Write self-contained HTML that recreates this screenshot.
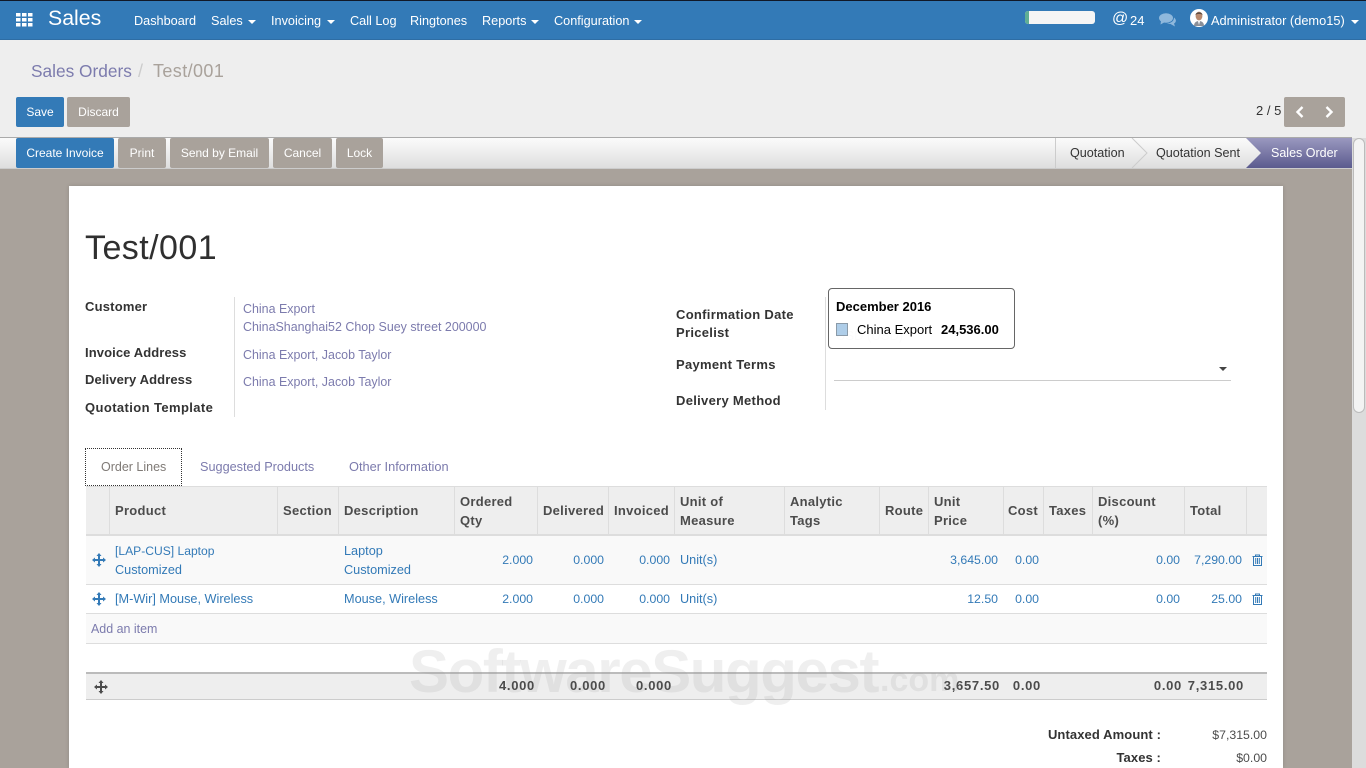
<!DOCTYPE html>
<html><head><meta charset="utf-8"><title>Sales</title>
<style>
html,body{margin:0;padding:0;width:1366px;height:768px;overflow:hidden;background:#a9a29b;font-family:"Liberation Sans",sans-serif;font-size:13px;color:#333}
#root{left:0;top:0;width:1366px;height:768px;overflow:hidden;background:#a9a29b}
div,span{position:absolute;white-space:nowrap}
.t{line-height:20px;height:20px}
.w{color:#fff}
.nav{color:#fff;font-size:12.7px;top:11px}
.car{width:0;height:0;border-left:4px solid transparent;border-right:4px solid transparent;border-top:4px solid currentColor}
.btn{height:30px;line-height:31px;text-align:center;color:#fff;background:#a9a29b;border-radius:2px;font-size:12px}
.pri{background:#337ab7}
.lb{font-weight:bold;color:#333;font-size:13px;letter-spacing:.3px}
.lk{color:#7c7bad;font-size:12.45px}
.th{font-weight:bold;color:#4c4c4c;font-size:13px;letter-spacing:.28px;line-height:19px}
.c{color:#337ab7;font-size:12.7px;line-height:20px}
.n{color:#337ab7;font-size:12.3px;line-height:20px;text-align:right}
.r{text-align:right}
.tot{font-weight:bold;color:#4c4c4c;font-size:13px;letter-spacing:.7px;line-height:20px}
.vl{top:487px;width:1px;height:47px;background:#ddd}
</style></head><body>
<div id="root">

<!-- navbar -->
<div style="left:0;top:0;width:1366px;height:40px;background:#337ab7;border-bottom:1px solid #2e6da4;box-sizing:border-box"></div>
<div style="left:0;top:0;width:1366px;height:1px;background:#111827"></div>
<svg style="position:absolute;left:16px;top:12px" width="18" height="16" viewBox="0 0 18 16"><g fill="#fff"><rect x="0" y="1" width="4.5" height="3.5"/><rect x="6" y="1" width="4.5" height="3.5"/><rect x="12" y="1" width="4.5" height="3.5"/><rect x="0" y="6" width="4.5" height="3.5"/><rect x="6" y="6" width="4.5" height="3.5"/><rect x="12" y="6" width="4.5" height="3.5"/><rect x="0" y="11" width="4.5" height="3.5"/><rect x="6" y="11" width="4.5" height="3.5"/><rect x="12" y="11" width="4.5" height="3.5"/></g></svg>
<span class="w" style="left:48px;top:5px;font-size:21.3px;line-height:26px">Sales</span>
<span class="t nav" style="left:134px">Dashboard</span>
<span class="t nav" style="left:211px">Sales</span><div class="car w" style="left:248px;top:20px"></div>
<span class="t nav" style="left:271px">Invoicing</span><div class="car w" style="left:327px;top:20px"></div>
<span class="t nav" style="left:350px">Call Log</span>
<span class="t nav" style="left:410px">Ringtones</span>
<span class="t nav" style="left:482px">Reports</span><div class="car w" style="left:531px;top:20px"></div>
<span class="t nav" style="left:554px">Configuration</span><div class="car w" style="left:634px;top:20px"></div>

<div style="left:1025px;top:11px;width:70px;height:13px;background:#f5f5f5;border-radius:3px;overflow:hidden"><div style="left:0;top:0;width:4px;height:13px;background:#5fae94"></div></div>
<span class="t w" style="left:1112px;top:9px;font-size:16px">@</span>
<span class="t w" style="left:1130px;top:11px;font-size:13px">24</span>
<svg style="position:absolute;left:1159px;top:13px" width="17" height="14" viewBox="0 0 17 14"><g fill="#8fb8dc"><ellipse cx="7" cy="5" rx="7" ry="4.7"/><path d="M2 8 L1.5 11.5 L6 9Z"/><path d="M15 4.5 C17.5 6.5 17.5 9 15 10.5 L16 13.5 L11.5 11 C10 11 9 10.8 8 10.3 C11.5 10.3 15 8.5 15 4.5Z"/></g></svg>
<svg style="position:absolute;left:1190px;top:9px" width="18" height="18" viewBox="0 0 18 18"><circle cx="9" cy="9" r="9" fill="#fff"/><ellipse cx="9" cy="7" rx="3.4" ry="4.4" fill="#b98a6e"/><path d="M5.5 6 C5.5 2.5 12.5 2.5 12.5 6 C11 4.5 7 4.5 5.5 6Z" fill="#5b4a40"/><path d="M4 17 C4 13 7 12 9 12 C11 12 14 13 14 17Z" fill="#8a8f98"/><path d="M8 12 L10 12 L9 16Z" fill="#fff"/></svg>
<span class="t w" style="left:1211px;top:11px;font-size:12.8px">Administrator (demo15)</span>
<div class="car w" style="left:1351px;top:20px"></div>

<!-- control panel -->
<div style="left:0;top:40px;width:1366px;height:98px;background:#eee"></div>
<span style="left:31px;top:59px;font-size:17.3px;line-height:24px;color:#7c7bad">Sales Orders</span>
<span style="left:138px;top:59px;font-size:18px;line-height:24px;color:#ccc">/</span>
<span style="left:153px;top:59px;font-size:18px;line-height:24px;color:#a9a29b;letter-spacing:.4px">Test/001</span>
<div class="btn pri" style="left:16px;top:97px;width:48px">Save</div>
<div class="btn" style="left:67px;top:97px;width:63px">Discard</div>
<span class="t" style="left:1256px;top:101px;font-size:13px;color:#333">2 / 5</span>
<div style="left:1284px;top:97px;width:61px;height:30px;background:#a9a29b;border-radius:2px"></div>
<svg style="position:absolute;left:1284px;top:97px" width="61" height="30" viewBox="0 0 61 30"><path d="M18.5 10 L13.5 15 L18.5 20" fill="none" stroke="#fff" stroke-width="2.4"/><path d="M42.5 10 L47.5 15 L42.5 20" fill="none" stroke="#fff" stroke-width="2.4"/></svg>

<!-- statusbar -->
<div style="left:0;top:137px;width:1352px;height:32px;box-sizing:border-box;border-top:1px solid #aaa;border-bottom:1px solid #ccc;background:linear-gradient(#fbfbfb,#dedede)"></div>
<div class="btn pri" style="left:16px;top:138px;width:98px">Create Invoice</div>
<div class="btn" style="left:118px;top:138px;width:48px">Print</div>
<div class="btn" style="left:170px;top:138px;width:99px">Send by Email</div>
<div class="btn" style="left:273px;top:138px;width:59px">Cancel</div>
<div class="btn" style="left:336px;top:138px;width:47px">Lock</div>

<svg style="position:absolute;left:1055px;top:138px" width="297" height="30" viewBox="0 0 297 30">
<defs><linearGradient id="g" x1="0" y1="0" x2="0" y2="1"><stop offset="0" stop-color="#9a98bf"/><stop offset="1" stop-color="#5b5b8e"/></linearGradient></defs>
<path d="M0.5 0V30" stroke="#ccc" fill="none"/>
<path d="M77 0 L92 15 L77 30" stroke="#ccc" fill="none"/>
<path d="M191 0 H297 V30 H191 L206 15Z" fill="url(#g)"/>
</svg>
<span class="t" style="left:1070px;top:143px;font-size:12.6px;color:#333">Quotation</span>
<span class="t" style="left:1156px;top:143px;font-size:12.6px;color:#333">Quotation Sent</span>
<span class="t w" style="left:1271px;top:143px;font-size:12.5px">Sales Order</span>

<!-- scrollbar -->
<div style="left:1352px;top:138px;width:14px;height:630px;background:#dcdcdc"></div>
<div style="left:1353px;top:138px;width:12px;height:275px;background:#f3f3f3;border-radius:6px;border:1px solid #bbb;box-sizing:border-box"></div>

<!-- sheet -->
<div style="left:69px;top:186px;width:1214px;height:582px;background:#fff;box-shadow:0 0 4px rgba(0,0,0,.15)"></div>
<span style="left:85px;top:227px;font-size:34px;line-height:42px;color:#2f2f2f;letter-spacing:.45px">Test/001</span>

<span class="t lb" style="left:85px;top:297px;letter-spacing:.2px">Customer</span>
<span class="t lb" style="left:85px;top:343px;letter-spacing:.1px">Invoice Address</span>
<span class="t lb" style="left:85px;top:370px;letter-spacing:.1px">Delivery Address</span>
<span class="t lb" style="left:85px;top:398px;letter-spacing:.4px">Quotation Template</span>
<div style="left:234px;top:297px;width:1px;height:120px;background:#ddd"></div>
<span class="t lk" style="left:243px;top:299px">China Export</span>
<span class="t lk" style="left:243px;top:317px">ChinaShanghai52 Chop Suey street 200000</span>
<span class="t lk" style="left:243px;top:345px">China Export, Jacob Taylor</span>
<span class="t lk" style="left:243px;top:372px">China Export, Jacob Taylor</span>

<span class="t lb" style="left:676px;top:305px">Confirmation Date</span>
<span class="t lb" style="left:676px;top:323px">Pricelist</span>
<span class="t lb" style="left:676px;top:355px">Payment Terms</span>
<span class="t lb" style="left:676px;top:391px">Delivery Method</span>
<div style="left:825px;top:297px;width:1px;height:113px;background:#ddd"></div>
<div style="left:834px;top:380px;width:397px;height:1px;background:#ccc"></div>
<div class="car" style="left:1219px;top:367px;color:#444"></div>
<span class="t" style="left:836px;top:326px;color:#ddd;font-size:13px">USD (USD)</span>

<!-- tooltip -->
<div style="left:828px;top:288px;width:187px;height:61px;box-sizing:border-box;background:rgba(255,255,255,.88);border:1px solid #666;border-radius:4px"></div>
<span class="t" style="left:836px;top:297px;font-weight:bold;font-size:13px;color:#000">December 2016</span>
<div style="left:836px;top:323px;width:12px;height:13px;background:#aecde8;border:1px solid #8a9aa8;box-sizing:border-box"></div>
<span class="t" style="left:857px;top:320px;font-size:13px;color:#000">China Export</span>
<span class="t" style="left:941px;top:320px;font-weight:bold;font-size:13px;color:#000">24,536.00</span>

<!-- tabs -->
<div style="left:85px;top:448px;width:97px;height:38px;box-sizing:border-box;border:1px dotted #333;background:#fff"></div>
<span class="t" style="left:101px;top:457px;font-size:12.5px;color:#7f7a76">Order Lines</span>
<span class="t lk" style="left:200px;top:457px;font-size:12.7px">Suggested Products</span>
<span class="t lk" style="left:349px;top:457px;font-size:12.8px">Other Information</span>

<!-- table header -->
<div style="left:86px;top:486px;width:1181px;height:50px;box-sizing:border-box;background:#eee;border-top:1px solid #ddd;border-bottom:2px solid #ddd"></div>
<div class="vl" style="left:109px"></div><div class="vl" style="left:277px"></div><div class="vl" style="left:338px"></div><div class="vl" style="left:454px"></div><div class="vl" style="left:537px"></div><div class="vl" style="left:608px"></div><div class="vl" style="left:674px"></div><div class="vl" style="left:784px"></div><div class="vl" style="left:879px"></div><div class="vl" style="left:928px"></div><div class="vl" style="left:1003px"></div><div class="vl" style="left:1043px"></div><div class="vl" style="left:1092px"></div><div class="vl" style="left:1184px"></div><div class="vl" style="left:1246px"></div>
<span class="th" style="left:115px;top:501px">Product</span>
<span class="th" style="left:283px;top:501px">Section</span>
<span class="th" style="left:344px;top:501px">Description</span>
<span class="th" style="left:460px;top:492px">Ordered</span><span class="th" style="left:460px;top:511px">Qty</span>
<span class="th" style="left:543px;top:501px">Delivered</span>
<span class="th" style="left:614px;top:501px">Invoiced</span>
<span class="th" style="left:680px;top:492px">Unit of</span><span class="th" style="left:680px;top:511px">Measure</span>
<span class="th" style="left:790px;top:492px">Analytic</span><span class="th" style="left:790px;top:511px">Tags</span>
<span class="th" style="left:885px;top:501px">Route</span>
<span class="th" style="left:934px;top:492px">Unit</span><span class="th" style="left:934px;top:511px">Price</span>
<span class="th" style="left:1008px;top:501px">Cost</span>
<span class="th" style="left:1049px;top:501px">Taxes</span>
<span class="th" style="left:1098px;top:492px">Discount</span><span class="th" style="left:1098px;top:511px">(%)</span>
<span class="th" style="left:1190px;top:501px">Total</span>

<!-- rows -->
<div style="left:86px;top:536px;width:1181px;height:49px;box-sizing:border-box;background:#f9f9f9;border-bottom:1px solid #ddd"></div>
<div style="left:86px;top:585px;width:1181px;height:29px;box-sizing:border-box;background:#fff;border-bottom:1px solid #ddd"></div>
<div style="left:86px;top:614px;width:1181px;height:30px;box-sizing:border-box;background:#f9f9f9;border-bottom:1px solid #ddd"></div>

<svg style="position:absolute;left:92px;top:553px" width="14" height="14" viewBox="0 0 14 14"><path d="M7 0 L9.5 3 H8 V6 H11 V4.5 L14 7 L11 9.5 V8 H8 V11 H9.5 L7 14 L4.5 11 H6 V8 H3 V9.5 L0 7 L3 4.5 V6 H6 V3 H4.5Z" fill="#337ab7"/></svg>
<svg style="position:absolute;left:92px;top:592px" width="14" height="14" viewBox="0 0 14 14"><path d="M7 0 L9.5 3 H8 V6 H11 V4.5 L14 7 L11 9.5 V8 H8 V11 H9.5 L7 14 L4.5 11 H6 V8 H3 V9.5 L0 7 L3 4.5 V6 H6 V3 H4.5Z" fill="#337ab7"/></svg>

<span class="c" style="left:115px;top:541px;font-size:12.1px">[LAP-CUS] Laptop</span>
<span class="c" style="left:115px;top:560px">Customized</span>
<span class="c" style="left:344px;top:541px">Laptop</span>
<span class="c" style="left:344px;top:560px">Customized</span>
<span class="n" style="right:833px;top:550px">2.000</span>
<span class="n" style="right:762px;top:550px">0.000</span>
<span class="n" style="right:696px;top:550px">0.000</span>
<span class="c" style="left:680px;top:550px">Unit(s)</span>
<span class="n" style="right:368px;top:550px">3,645.00</span>
<span class="n" style="right:327px;top:550px">0.00</span>
<span class="n" style="right:186px;top:550px">0.00</span>
<span class="n" style="right:124px;top:550px">7,290.00</span>

<span class="c" style="left:115px;top:589px">[M-Wir] Mouse, Wireless</span>
<span class="c" style="left:344px;top:589px">Mouse, Wireless</span>
<span class="n" style="right:833px;top:589px">2.000</span>
<span class="n" style="right:762px;top:589px">0.000</span>
<span class="n" style="right:696px;top:589px">0.000</span>
<span class="c" style="left:680px;top:589px">Unit(s)</span>
<span class="n" style="right:368px;top:589px">12.50</span>
<span class="n" style="right:327px;top:589px">0.00</span>
<span class="n" style="right:186px;top:589px">0.00</span>
<span class="n" style="right:124px;top:589px">25.00</span>

<svg style="position:absolute;left:1252px;top:554px" width="11" height="12" viewBox="0 0 11 12"><path d="M0.5 2.5H10.5M3.5 2.5V1H7.5V2.5M1.5 2.5V11.5H9.5V2.5M3.7 4V10M5.5 4V10M7.3 4V10" fill="none" stroke="#337ab7" stroke-width="1"/></svg>
<svg style="position:absolute;left:1252px;top:593px" width="11" height="12" viewBox="0 0 11 12"><path d="M0.5 2.5H10.5M3.5 2.5V1H7.5V2.5M1.5 2.5V11.5H9.5V2.5M3.7 4V10M5.5 4V10M7.3 4V10" fill="none" stroke="#337ab7" stroke-width="1"/></svg>

<span class="t lk" style="left:91px;top:619px">Add an item</span>

<!-- totals row -->
<div style="left:86px;top:672px;width:1181px;height:28px;box-sizing:border-box;background:#eee;border-top:2px solid #bbb;border-bottom:1px solid #ccc"></div>
<svg style="position:absolute;left:94px;top:680px" width="14" height="14" viewBox="0 0 14 14"><path d="M7 0 L9.5 3 H8 V6 H11 V4.5 L14 7 L11 9.5 V8 H8 V11 H9.5 L7 14 L4.5 11 H6 V8 H3 V9.5 L0 7 L3 4.5 V6 H6 V3 H4.5Z" fill="#4c4c4c"/></svg>

<!-- watermark -->
<span style="left:409px;top:643px;font-size:60px;line-height:58px;font-weight:bold;color:rgba(150,150,150,.15);letter-spacing:-1.4px">SoftwareSuggest</span>
<span style="left:880px;top:662px;font-size:34px;line-height:36px;font-weight:bold;color:rgba(150,150,150,.15)">.com</span>

<span class="tot r" style="right:831px;top:676px">4.000</span>
<span class="tot r" style="right:760px;top:676px">0.000</span>
<span class="tot r" style="right:694px;top:676px">0.000</span>
<span class="tot r" style="right:366px;top:676px">3,657.50</span>
<span class="tot r" style="right:325px;top:676px">0.00</span>
<span class="tot r" style="right:184px;top:676px">0.00</span>
<span class="tot r" style="right:122px;top:676px">7,315.00</span>

<!-- summary -->
<span class="t lb" style="right:205px;top:725px;letter-spacing:.1px">Untaxed Amount :</span>
<span class="t" style="right:99px;top:725px;color:#4c4c4c;font-size:12.3px">$7,315.00</span>
<span class="t lb" style="right:205px;top:748px;letter-spacing:.1px">Taxes :</span>
<span class="t" style="right:99px;top:748px;color:#4c4c4c;font-size:12.3px">$0.00</span>

</div>
</body></html>
